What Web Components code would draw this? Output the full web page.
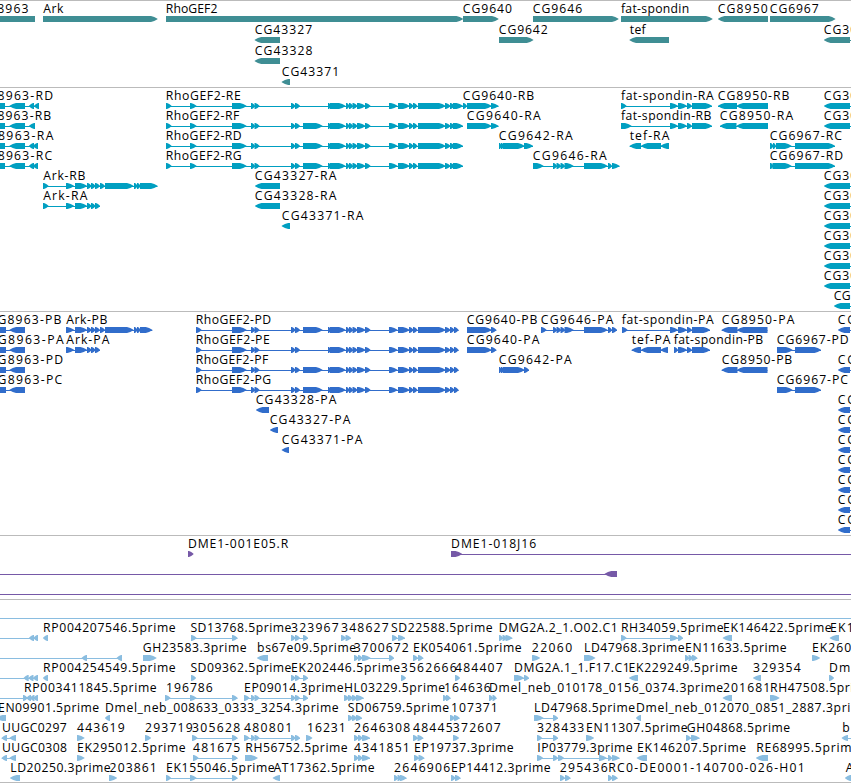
<!DOCTYPE html>
<html lang="en">
<head>
<meta charset="utf-8">
<title>Genome browser</title>
<style>
  body {
    margin: 0;
    overflow: hidden;
    background: #fff;
  }
</style>
</head>
<body>
<genome-browser></genome-browser>

<script>
// Exon lists: ">from,to" points right, "<from,to" points left, "-from,to" is a bare line.
const RHO_START = ">232,246.5 >251,255 >254.5,259.5 >291,295.5 >295,300";
const RHO_ALT = ">303,322.5";
const RHO_END = ">328,331 >330,345.5 >346,349.5 >349,353 >352.5,357.5 >357,365.5 >365,370.5 " +
  ">389,397.5 >398,409.5 >409,413.5 >413,417.5 >418,445.5 >445,450.5";
const RHO_R = `>166,171.5 >190,196.5 ${RHO_START}`;
const RHO_P = `>196,201.5 ${RHO_START}`;
const RHO_R_END = `${RHO_END} >450,454.5 >453,463`;
const RHO_P_END = `${RHO_END} >450,454.5 >454,458.5`;
const ARK = ">66,74 >75,87 >87,91.5 >91,95.5 >95,100";
const ARK_LONG = `${ARK} >100,105 >105,133.5 >134,137.5 >137,140.5`;
const CG9646 = ">553,557 >556.5,561 >560.5,565 >564.5,573.5 >584,607.5 >608,612";
const SPONDIN = ">678,687 >687,692";

// Each feature: [label, label left, label right, glyphs]
const CG30 = ["CG30", 824.7, 856.5, "<824,850 -850,851"];
const CG_P = ["CG", 838.7, 855.5, "<838,850 -850,851"];

const TRACKS = [
  {
    color: "#3f8e94", laneHeight: 21, pad: 2,
    lanes: [
      [
        ["CG8963", -20.5, 27.7, "<-22,35"],
        ["Ark", 44.1, 62.7, ">43,157.5"],
        ["RhoGEF2", 166.7, 216.7, ">166,463"],
        ["CG9640", 463.7, 511.3, ">463,498.5"],
        ["CG9646", 533.7, 581.5, ">533,618.5"],
        ["fat-spondin", 621.8, 688.5, ">621,712.5"],
        ["CG8950", 718.7, 767, "<718,768"],
        ["CG6967", 770.7, 818, ">770,835.3"]
      ],
      [
        ["CG43327", 255.7, 311.5, "<254.7,280"],
        ["CG9642", 499.7, 547, ">499,533.3"],
        ["tef", 630.6, 645, "<629.5,669"],
        CG30
      ],
      [["CG43328", 255.7, 311.7, "<254.7,280"]],
      [["CG43371", 282.7, 338.5, "<281.7,290"]]
    ]
  },
  {
    color: "#009fc1", laneHeight: 20, pad: 3,
    lanes: [
      [
        ["CG8963-RD", -20.5, 52.3, "<-22,5 <9.5,25 <29,34 <34,39"],
        ["RhoGEF2-RE", 166.7, 240, `${RHO_R} ${RHO_R_END}`],
        ["CG9640-RB", 463.7, 533.5, ">463,467 >467,491.5 >491,498.5"],
        ["fat-spondin-RA", 621.8, 713, `>621,626.5 >670,678 ${SPONDIN} >692,712`],
        ["CG8950-RB", 718.7, 788.7, "<718,737 <736.5,768"],
        CG30
      ],
      [
        ["CG8963-RB", -20.5, 50.5, "<-22,5 <9.5,25 <29,35"],
        ["RhoGEF2-RF", 166.7, 238.5, `${RHO_R} ${RHO_ALT} ${RHO_R_END}`],
        ["CG9640-RA", 467.7, 540, ">467,491.5 >491,498.5"],
        ["fat-spondin-RB", 621.8, 710.7, `>621,631.5 >670,678 ${SPONDIN} >692,712`],
        ["CG8950-RA", 720.7, 792.5, "<720,736.5 <736.5,768"],
        CG30
      ],
      [
        ["CG8963-RA", -20.5, 52.7, "<-22,5 <9.5,25 <29,34 <33,38"],
        ["RhoGEF2-RD", 166.7, 241, `${RHO_R} ${RHO_ALT} ${RHO_R_END}`],
        ["CG9642-RA", 499.7, 572, ">499,501.5 >501,504 >503,524.5 >524,533"],
        ["tef-RA", 630.6, 668.7, "<629.7,641 <641,661 <660.5,669"],
        ["CG6967-RC", 770.7, 841.3, ">770,773.5 >773,776 >776,791.5 >795,835"]
      ],
      [
        ["CG8963-RC", -20.5, 51.5, "<-22,5 <9.5,25 <29,34 <33,38"],
        ["RhoGEF2-RG", 166.7, 241, `${RHO_R} ${RHO_ALT} ${RHO_R_END}`],
        ["CG9646-RA", 533.7, 606, `>533,543.5 ${CG9646} >612,619.5`],
        ["CG6967-RD", 770.7, 842.5, ">770,773.5 >772.5,791.5 >795,835"]
      ],
      [
        ["Ark-RB", 44.1, 84.7, `>43,48.5 ${ARK_LONG} >140,157.5`],
        ["CG43327-RA", 255.7, 335.7, "<255,280"],
        CG30
      ],
      [
        ["Ark-RA", 44.1, 86.7, `>43,48.5 ${ARK}`],
        ["CG43328-RA", 255.7, 335.7, "<255,280"],
        CG30
      ],
      [["CG43371-RA", 282.7, 362.7, "<281.7,290"], CG30],
      [CG30],
      [CG30],
      [CG30],
      [["CG", 834.7, 850, "<834,850 -850,851"]]
    ]
  },
  {
    color: "#316dcb", laneHeight: 20, pad: 3,
    lanes: [
      [
        ["CG8963-PB", -10.5, 60.7, "<-12,6 <9.5,25"],
        ["Ark-PB", 67.1, 106.7, `${ARK_LONG} >140,152.3`],
        ["RhoGEF2-PD", 196.7, 270.3, `${RHO_P} ${RHO_ALT} ${RHO_P_END}`],
        ["CG9640-PB", 467.7, 536.7, ">467,491.5 >491,496.3"],
        ["CG9646-PA", 541.7, 612.7, `>541,546.5 ${CG9646} >612,617`],
        ["fat-spondin-PA", 622.6, 713, `>622,627.5 >670,678 ${SPONDIN} >692,710`],
        ["CG8950-PA", 722.7, 793.7, "<721.7,737.5 <737,767.5"],
        CG_P
      ],
      [
        ["CG8963-PA", -10.5, 63, "<-12,6 <9.5,25"],
        ["Ark-PA", 67.1, 108.7, ARK],
        ["RhoGEF2-PE", 196.7, 269, `${RHO_P} ${RHO_P_END}`],
        ["CG9640-PA", 467.7, 538.7, ">467,491.5 >491,496.3"],
        ["tef-PA", 632.6, 669.7, "<631.7,641 <641,661 <660.5,668"],
        ["fat-spondin-PB", 674.6, 762.5, `>674,678 ${SPONDIN} >692,710`],
        ["CG6967-PD", 777.7, 848, ">777,792.5 >795,821"]
      ],
      [
        ["CG8963-PD", -10.5, 62.5, "<-12,6 <9.5,25"],
        ["RhoGEF2-PF", 196.7, 267.5, `${RHO_P} ${RHO_ALT} ${RHO_P_END}`],
        ["CG9642-PA", 499.7, 571, ">499,501.5 >501,504 >503,524.5 >524,529"],
        ["CG8950-PB", 722.7, 791.5, "<721.7,737.5 <737,767.5"],
        CG_P
      ],
      [
        ["CG8963-PC", -10.5, 61.5, "<-12,6 <9.5,25"],
        ["RhoGEF2-PG", 196.7, 270.5, `${RHO_P} ${RHO_ALT} ${RHO_P_END}`],
        ["CG6967-PC", 777.7, 847.3, ">777,792.5 >795,821"]
      ],
      [["CG43328-PA", 256.7, 335.7, "<256,269"], CG_P],
      [["CG43327-PA", 270.7, 349.7, "<270,278"], CG_P],
      [["CG43371-PA", 282.7, 361.7, "<281.7,289"], CG_P],
      [CG_P],
      [CG_P],
      [CG_P],
      [CG_P]
    ]
  },
  {
    color: "#7659a7", laneHeight: 20, pad: 3,
    lanes: [
      [
        ["DME1-001E05.R", 189, 287.5, ">188,193.5"],
        ["DME1-018J16", 452, 535.5, ">451,462 -451,851"]
      ],
      [["", 0, 0, "-0,617 <604.7,617"]],
      [["", 0, 0, "-0,851"]]
    ]
  },
  {
    color: "#8abde0", laneHeight: 20, pad: 2,
    lanes: [
      [["", 0, 0, "-0,851"]],
      [
        ["", 0, 0, "-0,38 <29,34 <33.5,38"],
        ["RP004207546.5prime", 44, 175, "<43,48"],
        ["SD13768.5prime", 191.3, 290.7, ">191,196.5 >232,237.5"],
        ["323967", 292, 338, ">291,295.5 >295,300 >303,308"],
        ["348627", 342, 388, ">341,346 >345.5,351"],
        ["SD22588.5prime", 392, 492, ">392,397.5 >398,405"],
        ["DMG2A.2_1.O02.C1", 499.7, 617, ">499,503 >502.5,507 >505.5,512.3"],
        ["RH34059.5prime", 621.9, 723, ">621,626.5 >670,678 >678,683"],
        ["EK146422.5prime", 724, 831, "<722.7,732"],
        ["EK14", 831, 861, "<829.7,839"]
      ],
      [
        ["", 0, 0, "-0,122 <81.7,87 <116.7,122"],
        ["GH23583.3prime", 143.7, 246, ">143,156.5"],
        ["bs67e09.5prime", 258, 355.5, "<257,268"],
        ["3700672", 354.7, 408, ">354,358.5 >358,362.5 >362,370.5 >389,394"],
        ["EK054061.5prime", 414, 521, ">413,418 >418,423.3"],
        ["22060", 532.7, 571.5, ">532,540"],
        ["LD47968.3prime", 585, 684, ">584,595.3"],
        ["EN11633.5prime", 686, 786, ">685,689 >688.5,693 >692,697.3"],
        ["EK260", 813, 850.5, ">812,820"]
      ],
      [
        ["", 0, 0, "-0,38 <23.7,28.7 <28.5,33.5 <33,38"],
        ["RP004254549.5prime", 44, 175, "<43,48"],
        ["SD09362.5prime", 191.3, 290.7, ">191,196"],
        ["EK202446.5prime", 292, 399.5, ">291,295.5 >295,300 >303,308"],
        ["3562666", 401.7, 456, ">401,406"],
        ["484407", 456, 502, ">455,460"],
        ["DMG2A.1_1.F17.C1", 514.9, 629, ">514,524 >524,529"],
        ["EK229249.5prime", 629.5, 737, "<629,638"],
        ["329354", 754, 800, "<753,761"],
        ["Dmel", 830, 862, ">829,834"]
      ],
      [
        ["", 0, 0, "-0,38 >23,27.5 <26.5,31 <30,34.5 <33.5,38"],
        ["RP003411845.5prime", 25, 156, ""],
        ["196786", 167, 212, ">165,170.5 >190,196.5 >232,237.5"],
        ["EP09014.3prime", 245, 343, ">244,249.5 >251,255 >254.5,259.5 >291,295.5 >295,300 >303,308"],
        ["HL03229.5prime", 344.9, 444.5, ">344,349 >348,353 >352,357 >356,363.7"],
        ["164636", 445, 490, ">443,447 >446,450.5"],
        ["Dmel_neb_010178_0156_0374.3prime", 490, 722.5, ">489,493 >492.5,496.5"],
        ["201681", 723.9, 769.5, "<722.7,732"],
        ["RH47508.5prime", 771, 872, ">770,779.5"]
      ],
      [
        ["EN09901.5prime", -1, 98.5, "<-4,6"],
        ["Dmel_neb_008633_0333_3254.3prime", 106, 338, "<105,110"],
        ["SD06759.5prime", 348.7, 448.5, ">348,353 >352,357 >356,362"],
        ["107371", 452, 497, ">450,455 >454,459.5"],
        ["LD47968.5prime", 535, 634.5, ">534,543.5 >553,558"],
        ["Dmel_neb_012070_0851_2887.3prime", 637, 869, "<636,641"]
      ],
      [
        ["UUGC0297", 3, 66, "<1.7,7 <9.5,16"],
        ["443619", 78, 124, ">77,84.5"],
        ["293719", 145.9, 192, ">145,151"],
        ["305628", 193, 239.5, ">192,197.5 >232,237.5"],
        ["480801", 245, 291.5, ">244,249.5 >251,255 >254.5,259.5 >291,295.5 >295,300"],
        ["16231", 308, 345, ">306,312.3"],
        ["2646308", 355, 409.5, ">354,358.5 >358,362.5 >362,370"],
        ["48445", 413.9, 452, ">413,418 >417.5,423.3"],
        ["372607", 453.7, 500, ">453,459"],
        ["328433", 537.9, 583.5, ">537,542 >553,558"],
        ["EN11307.5prime", 587, 687, ">586,594"],
        ["GH04868.5prime", 687.7, 789.5, ">686,691 >691,699.5"],
        ["b", 843.2, 849, "<841.7,848 -848,851"]
      ],
      [
        ["UUGC0308", 3, 66.3, "<1.7,7 <9.5,16"],
        ["EK295012.5prime", 78, 185, ">77,84.5"],
        ["481675", 194, 239.5, ">193,198.5 >232,237.5"],
        ["RH56752.5prime", 246.2, 347, ">245,257.7"],
        ["4341851", 355, 409, ">354,358.5 >358,362.5 >362,370"],
        ["EP19737.3prime", 415, 513, ">414,419 >418.5,424.3"],
        ["IP03779.3prime", 538.2, 632, ">537,543 >553,558 >558,564 >599,606.7 >608,612 >612,619.5"],
        ["EK146207.5prime", 638, 745.5, "<636.7,647"],
        ["RE68995.5prime", 757.2, 858.5, "<756,768"]
      ],
      [
        ["LD20250.3prime", 11.2, 110, "<10,20"],
        ["203861", 110.5, 156, ">109,117"],
        ["EK155046.5prime", 167, 274, ">166,171 >190,196.5 >232,237.5"],
        ["AT17362.5prime", 274.3, 374, "<272.7,280"],
        ["2646906", 395, 449.5, ">394,398 >397.5,402 >400,406.5"],
        ["EP14412.3prime", 452, 550, ">451,455.5 >455,460.5"],
        ["295436", 560.7, 607, ">560,565 >565,570.5"],
        ["RC0-DE0001-140700-026-H01", 609.2, 804, ">608,612.5 >612,617.5"],
        ["A", 846.6, 853, "<845,851"]
      ]
    ]
  }
];

const TIP = 6.5;

const parseGlyphs = (text) => text.split(" ").filter(Boolean).map((item) => {
  const [from, to] = item.substring(1).split(",").map(Number);
  return { kind: item[0], from, to };
});

// The head bulges a little before it closes on the centre line
const drawArrow = ({ kind, from, to }) => {
  const tip = Math.min(TIP, to - from - 1);
  const [tail, head, back] = kind === ">" ? [from, to, -tip] : [to, from, tip];
  const shoulder = head + back;
  const bulge = head + back * 0.5;
  const points = `${tail},15 ${shoulder},15 ${bulge},16 ${head},17.7 ${head},18.3 ${bulge},20 ${shoulder},21 ${tail},21`;
  return `<polygon points="${points}"/>`;
};

const drawLine = (from, to) => `<rect x="${from}" y="18" width="${to - from}" height="1"/>`;

class TrackLane extends HTMLElement {
  constructor() {
    super();
    this.attachShadow({ mode: "open" });
    this.features = [];
  }

  connectedCallback() {
    this.render();
  }

  static get styles() {
    return `
      :host {
        display: block;
        height: var(--lane-height, 20px);
      }
      svg {
        display: block;
        width: 100%;
        height: 100%;
        overflow: visible;
        fill: var(--track-color);
      }
      text {
        font: 12.2px "Open Sans", "DejaVu Sans", sans-serif;
        fill: #000;
      }
    `;
  }

  drawFeature([label, left, right, text]) {
    const glyphs = parseGlyphs(text);
    const arrows = glyphs.filter((glyph) => glyph.kind !== "-");
    const lines = glyphs.filter((glyph) => glyph.kind === "-");
    let html = lines.map((line) => drawLine(line.from, line.to)).join("");
    // Introns join the exons of one feature
    if (arrows.length > 1) {
      html += drawLine(arrows[0].from, arrows[arrows.length - 1].to);
    }
    html += arrows.map(drawArrow).join("");
    if (label) {
      const length = label.length > 1 ? `textLength="${(right - left + 1.6).toFixed(1)}"` : "";
      html += `<text x="${left - 0.9}" y="12" ${length}>${label}</text>`;
    }
    return html;
  }

  render() {
    this.shadowRoot.innerHTML = `
      <style>${TrackLane.styles}</style>
      <svg>${this.features.map((feature) => this.drawFeature(feature)).join("")}</svg>
    `;
  }
}

class GenomeTrack extends HTMLElement {
  constructor() {
    super();
    this.attachShadow({ mode: "open" });
    this.shadowRoot.innerHTML = `
      <style>
        :host {
          display: flex;
          flex-direction: column;
          border-top: 1px solid #bbb;
          padding-bottom: var(--track-pad, 3px);
        }
      </style>
      <slot></slot>
    `;
  }
}

class GenomeBrowser extends HTMLElement {
  constructor() {
    super();
    this.attachShadow({ mode: "open" });
  }

  connectedCallback() {
    this.shadowRoot.innerHTML = `
      <style>
        :host {
          display: flex;
          flex-direction: column;
          width: 851px;
          overflow: hidden;
          border-bottom: 1px solid #bbb;
        }
      </style>
    `;
    TRACKS.forEach((data) => {
      const track = document.createElement("genome-track");
      track.style.setProperty("--track-color", data.color);
      track.style.setProperty("--lane-height", `${data.laneHeight}px`);
      track.style.setProperty("--track-pad", `${data.pad}px`);
      data.lanes.forEach((features) => {
        const lane = document.createElement("track-lane");
        lane.features = features;
        track.append(lane);
      });
      this.shadowRoot.append(track);
    });
  }
}

customElements.define("track-lane", TrackLane);
customElements.define("genome-track", GenomeTrack);
customElements.define("genome-browser", GenomeBrowser);
</script>
</body>
</html>
